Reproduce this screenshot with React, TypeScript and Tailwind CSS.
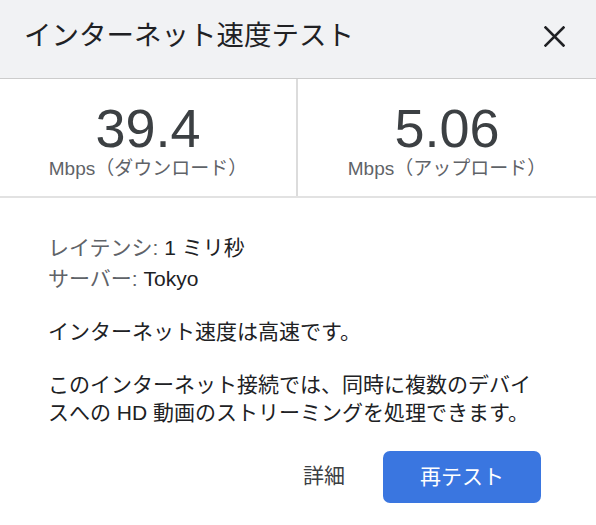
import React from 'react';

const font = { fontFamily: '"Liberation Sans", "Noto Sans CJK JP", sans-serif' };

const Metric = ({ value, label, border }: { value: string; label: string; border?: boolean }) => (
  <div className={`flex flex-col items-center pt-[22px] ${border ? 'border-r-2 border-[#dcdcdc]' : ''}`}>
    <div className="text-[54px] leading-[54px] text-[#3c4043]">{value}</div>
    <div className="mt-[2px] text-[19px] leading-[24px] text-[#5f6368]">{label}</div>
  </div>
);

export default function App() {
  return (
    <div className="w-[596px] h-[525px] bg-white overflow-hidden" style={font}>
      {/* header */}
      <div className="h-[79px] bg-[#f1f2f4] border-b-[1.5px] border-[#cccccc] flex items-center justify-between pl-[24px] pr-[31px] pb-[6px]">
        <h1 className="text-[27.5px] leading-[32px] text-[#202124]">インターネット速度テスト</h1>
        <svg width="21" height="21" viewBox="0 0 21 21" className="text-[#202124]">
          <path d="M1.5 1.5 L19.5 19.5 M19.5 1.5 L1.5 19.5" stroke="currentColor" strokeWidth="2.6" strokeLinecap="square" />
        </svg>
      </div>

      {/* results */}
      <div className="grid grid-cols-2 h-[119px] border-b-2 border-[#e2e2e2]">
        <Metric value="39.4" label="Mbps（ダウンロード）" border />
        <Metric value="5.06" label="Mbps（アップロード）" />
      </div>

      {/* details */}
      <div className="pl-[48px] pr-[60px] pt-[34px] text-[21px]">
        <div className="leading-[31px]">
          <div>
            <span className="text-[#5f6368]">レイテンシ: </span>
            <span className="text-[#202124]">1 ミリ秒</span>
          </div>
          <div>
            <span className="text-[#5f6368]">サーバー: </span>
            <span className="text-[#202124]">Tokyo</span>
          </div>
        </div>
        <p className="mt-[24px] leading-[28px] text-[#202124]">インターネット速度は高速です。</p>
        <p className="mt-[25px] leading-[28px] text-[#202124]">
          このインターネット接続では、同時に複数のデバイスへの HD 動画のストリーミングを処理できます。
        </p>
      </div>

      <div className="flex justify-end items-center gap-[38px] pr-[55px] mt-[24px]">
        <button className="text-[21px] text-[#3c4043] pb-[2px]">詳細</button>
        <button className="w-[158px] h-[52px] rounded-[7px] bg-[#3a76e0] text-white text-[21px]">再テスト</button>
      </div>
    </div>
  );
}
